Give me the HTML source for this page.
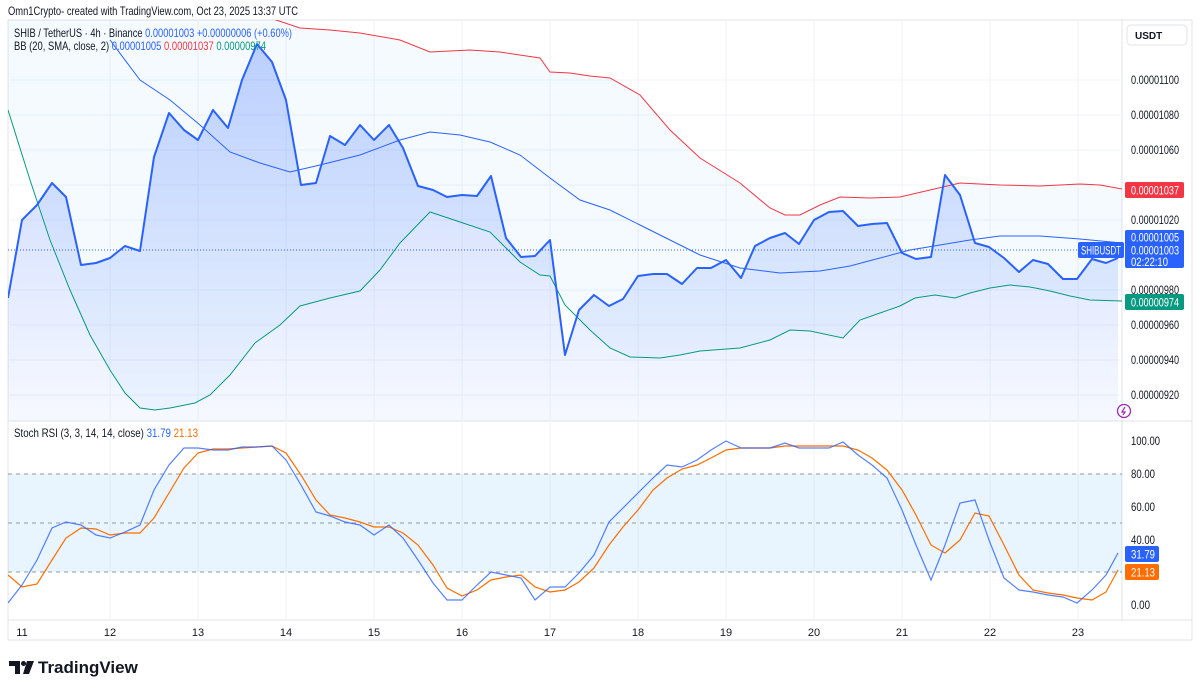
<!DOCTYPE html>
<html><head><meta charset="utf-8"><style>
html,body{margin:0;padding:0;background:#fff;width:1200px;height:691px;overflow:hidden}
svg{display:block;font-family:"Liberation Sans",sans-serif}
</style></head><body>
<svg width="1200" height="691" viewBox="0 0 1200 691" xmlns="http://www.w3.org/2000/svg">
<defs>
<linearGradient id="g" x1="0" y1="0" x2="0" y2="1"><stop offset="0" stop-color="#2962ff" stop-opacity="0.28"/><stop offset="1" stop-color="#2962ff" stop-opacity="0.04"/></linearGradient>
<clipPath id="c1"><rect x="8" y="20" width="1114" height="401"/></clipPath>
<clipPath id="c2"><rect x="8" y="422" width="1114" height="198"/></clipPath>
</defs>
<text x="8" y="15" font-size="12" fill="#131722" textLength="290" lengthAdjust="spacingAndGlyphs">Omn1Crypto- created with TradingView.com, Oct 23, 2025 13:37 UTC</text>
<rect x="8" y="20" width="1184" height="620" fill="none" stroke="#e0e3eb"/>
<line x1="1122" y1="20" x2="1122" y2="620" stroke="#e0e3eb"/>
<line x1="8" y1="421" x2="1192" y2="421" stroke="#e0e3eb"/>
<line x1="8" y1="620" x2="1192" y2="620" stroke="#e0e3eb"/>
<g stroke="#f0f3fa">
<line x1="8" y1="80" x2="1122" y2="80"/><line x1="8" y1="115" x2="1122" y2="115"/><line x1="8" y1="150" x2="1122" y2="150"/><line x1="8" y1="185" x2="1122" y2="185"/><line x1="8" y1="220" x2="1122" y2="220"/><line x1="8" y1="290" x2="1122" y2="290"/><line x1="8" y1="325" x2="1122" y2="325"/><line x1="8" y1="360" x2="1122" y2="360"/><line x1="8" y1="395" x2="1122" y2="395"/>
<line x1="110" y1="20" x2="110" y2="620"/><line x1="198" y1="20" x2="198" y2="620"/><line x1="286" y1="20" x2="286" y2="620"/><line x1="374" y1="20" x2="374" y2="620"/><line x1="462" y1="20" x2="462" y2="620"/><line x1="550" y1="20" x2="550" y2="620"/><line x1="638" y1="20" x2="638" y2="620"/><line x1="726" y1="20" x2="726" y2="620"/><line x1="814" y1="20" x2="814" y2="620"/><line x1="902" y1="20" x2="902" y2="620"/><line x1="990" y1="20" x2="990" y2="620"/><line x1="1078" y1="20" x2="1078" y2="620"/>
</g>
<g clip-path="url(#c1)">
<polygon fill="#2196f3" fill-opacity="0.05" points="110,0 270,18 300,28 330,30 360,33 400,40 430,52 470,50 500,52 540,58 550,72 570,73 590,76 610,78 640,95 670,130 700,158 740,183 770,208 785,215 800,215 820,205 840,197 870,198 900,197 930,190 960,183 1000,185 1040,186 1080,184 1100,185 1122,189 1122,301 1090,300 1070,296 1050,291 1030,287 1010,285 990,288 970,293 955,298 935,295 915,298 900,306 880,313 860,320 843,338 810,331 790,330 770,340 740,348 700,351 680,355 660,358 630,357 610,348 590,330 565,305 550,276 540,275 520,262 490,232 460,222 430,212 400,243 380,270 360,291 330,298 300,306 280,325 255,343 230,375 210,395 195,403 170,408 155,410 140,408 125,393 110,370 90,335 70,290 50,240 30,180 8,110 0,100 0,0"/>
<polygon fill="url(#g)" points="8,298 22,220 37,205 52,183 66,197 81,265 96,263 110,258 125,246 140,251 154,157 169,113 184,130 198,140 213,110 228,128 242,80 257,44 272,62 286,100 301,185 316,183 330,136 345,145 360,125 374,140 389,125 403,148 418,186 433,190 447,197 462,195 477,196 491,176 506,238 521,257 535,256 550,240 565,355 579,310 594,295 609,306 623,299 638,276 653,274 667,274 682,284 697,268 711,268 726,260 741,278 755,246 770,238 785,233 799,244 814,220 829,212 843,211 858,226 872,224 887,223 902,253 916,259 931,257 945,175 960,195 975,243 989,247 1004,258 1019,272 1033,260 1048,264 1063,279 1077,279 1092,259 1106,263 1118,258 1118,421 8,421"/>
<polyline fill="none" stroke="#f23645" stroke-width="1" points="270,18 300,28 330,30 360,33 400,40 430,52 470,50 500,52 540,58 550,72 570,73 590,76 610,78 640,95 670,130 700,158 740,183 770,208 785,215 800,215 820,205 840,197 870,198 900,197 930,190 960,183 1000,185 1040,186 1080,184 1100,185 1122,189"/>
<polyline fill="none" stroke="#2962ff" stroke-width="1" points="110,40 140,80 170,100 200,125 230,152 260,163 290,172 320,165 360,155 400,140 430,132 460,135 490,142 520,155 550,178 580,200 610,210 640,225 670,240 700,255 740,268 780,273 820,271 850,266 880,258 910,250 940,245 970,240 1000,236 1040,236 1080,239 1122,243"/>
<polyline fill="none" stroke="#089981" stroke-width="1" points="8,110 30,180 50,240 70,290 90,335 110,370 125,393 140,408 155,410 170,408 195,403 210,395 230,375 255,343 280,325 300,306 330,298 360,291 380,270 400,243 430,212 460,222 490,232 520,262 540,275 550,276 565,305 590,330 610,348 630,357 660,358 680,355 700,351 740,348 770,340 790,330 810,331 843,338 860,320 880,313 900,306 915,298 935,295 955,298 970,293 990,288 1010,285 1030,287 1050,291 1070,296 1090,300 1122,301"/>
<line x1="8" y1="250" x2="1122" y2="250" stroke="#2962ff" stroke-dasharray="1,2"/>
<polyline fill="none" stroke="#2962ff" stroke-width="2" stroke-linejoin="round" points="8,298 22,220 37,205 52,183 66,197 81,265 96,263 110,258 125,246 140,251 154,157 169,113 184,130 198,140 213,110 228,128 242,80 257,44 272,62 286,100 301,185 316,183 330,136 345,145 360,125 374,140 389,125 403,148 418,186 433,190 447,197 462,195 477,196 491,176 506,238 521,257 535,256 550,240 565,355 579,310 594,295 609,306 623,299 638,276 653,274 667,274 682,284 697,268 711,268 726,260 741,278 755,246 770,238 785,233 799,244 814,220 829,212 843,211 858,226 872,224 887,223 902,253 916,259 931,257 945,175 960,195 975,243 989,247 1004,258 1019,272 1033,260 1048,264 1063,279 1077,279 1092,259 1106,263 1118,258"/>
</g>
<text x="14" y="37" font-size="12" fill="#131722" textLength="278" lengthAdjust="spacingAndGlyphs">SHIB / TetherUS · 4h · Binance <tspan fill="#2962ff">0.00001003</tspan> <tspan fill="#2962ff">+0.00000006 (+0.60%)</tspan></text>
<text x="14" y="50" font-size="12" fill="#131722" textLength="252" lengthAdjust="spacingAndGlyphs">BB (20, SMA, close, 2) <tspan fill="#2962ff">0.00001005</tspan> <tspan fill="#f23645">0.00001037</tspan> <tspan fill="#089981">0.00000974</tspan></text>
<rect x="1127" y="25" width="60" height="20" rx="4" fill="#fff" stroke="#e0e3eb"/>
<text x="1135" y="39" font-size="10" font-weight="bold" fill="#131722">USDT</text>
<g font-size="12" fill="#131722">
<text x="1131" y="84" textLength="48" lengthAdjust="spacingAndGlyphs">0.00001100</text><text x="1131" y="119" textLength="48" lengthAdjust="spacingAndGlyphs">0.00001080</text><text x="1131" y="154" textLength="48" lengthAdjust="spacingAndGlyphs">0.00001060</text><text x="1131" y="224" textLength="48" lengthAdjust="spacingAndGlyphs">0.00001020</text><text x="1131" y="294" textLength="48" lengthAdjust="spacingAndGlyphs">0.00000980</text><text x="1131" y="329" textLength="48" lengthAdjust="spacingAndGlyphs">0.00000960</text><text x="1131" y="364" textLength="48" lengthAdjust="spacingAndGlyphs">0.00000940</text><text x="1131" y="399" textLength="48" lengthAdjust="spacingAndGlyphs">0.00000920</text>
</g>
<rect x="1125" y="182" width="59" height="16" rx="2" fill="#f23645"/><text x="1131" y="194.5" font-size="12" fill="#fff" textLength="48" lengthAdjust="spacingAndGlyphs">0.00001037</text>
<rect x="1125" y="230" width="59" height="38" rx="2" fill="#2962ff"/>
<text x="1131" y="241.5" font-size="12" fill="#fff" textLength="48" lengthAdjust="spacingAndGlyphs">0.00001005</text><text x="1131" y="254.5" font-size="12" fill="#fff" textLength="48" lengthAdjust="spacingAndGlyphs">0.00001003</text><text x="1131" y="266" font-size="12" fill="#fff" textLength="37" lengthAdjust="spacingAndGlyphs">02:22:10</text>
<rect x="1078" y="242" width="46" height="16" rx="2" fill="#2962ff"/><text x="1081" y="254.5" font-size="11.5" fill="#fff" textLength="40" lengthAdjust="spacingAndGlyphs">SHIBUSDT</text>
<rect x="1125" y="294" width="59" height="16" rx="2" fill="#089981"/><text x="1131" y="306.5" font-size="12" fill="#fff" textLength="48" lengthAdjust="spacingAndGlyphs">0.00000974</text>
<circle cx="1124" cy="411" r="6.5" fill="none" stroke="#9c27b0" stroke-width="1.3"/>
<path d="M1125,407 L1122,412 L1125,412 L1123,415" fill="none" stroke="#9c27b0" stroke-width="1.2"/>
<g clip-path="url(#c2)">
<rect x="8" y="474" width="1114" height="98" fill="#2196f3" fill-opacity="0.1"/>
<g stroke="#9598a1" stroke-dasharray="4,4"><line x1="8" y1="474" x2="1122" y2="474"/><line x1="8" y1="523" x2="1122" y2="523"/><line x1="8" y1="572" x2="1122" y2="572"/></g>
<polyline fill="none" stroke="#ff6d00" stroke-width="1.2" points="8,575 22,587 37,584 52,560 66,538 81,528 96,529 110,535 125,533 140,533 154,518 169,493 184,468 198,453 213,449 228,449 242,448 257,447 272,446 286,453 301,475 316,500 330,515 345,518 360,522 374,527 389,527 403,533 418,545 433,565 447,588 462,596 477,590 491,580 506,577 521,575 535,587 550,592 565,590 579,582 594,568 609,545 623,527 638,510 653,490 667,478 682,469 697,465 711,458 726,450 741,448 755,448 770,448 785,446 799,446 814,446 829,446 843,446 858,450 872,458 887,470 902,490 916,515 931,545 945,553 960,540 975,513 989,516 1004,545 1019,575 1033,590 1048,593 1063,595 1077,598 1092,600 1106,592 1118,570"/>
<polyline fill="none" stroke="#2962ff" stroke-width="1.2" stroke-opacity="0.8" points="8,603 22,585 37,560 52,528 66,522 81,525 96,535 110,538 125,532 140,525 154,490 169,465 184,448 198,448 213,450 228,450 242,447 257,447 272,446 286,460 301,485 316,512 330,516 345,522 360,525 374,535 389,525 403,538 418,560 433,583 447,600 462,600 477,585 491,572 506,575 521,578 535,600 550,587 565,587 579,573 594,555 609,522 623,508 638,493 653,478 667,465 682,467 697,460 711,450 726,441 741,448 755,448 770,448 785,443 799,448 814,448 829,448 843,442 858,455 872,465 887,478 902,510 916,545 931,580 945,545 960,503 975,500 989,540 1004,578 1019,590 1033,592 1048,595 1063,597 1077,603 1092,590 1106,575 1118,553"/>
</g>
<text x="14" y="437" font-size="12" fill="#131722" textLength="184" lengthAdjust="spacingAndGlyphs">Stoch RSI (3, 3, 14, 14, close) <tspan fill="#2962ff">31.79</tspan> <tspan fill="#ff6d00">21.13</tspan></text>
<g font-size="12" fill="#131722">
<text x="1131" y="445" textLength="29" lengthAdjust="spacingAndGlyphs">100.00</text><text x="1131" y="478" textLength="24" lengthAdjust="spacingAndGlyphs">80.00</text><text x="1131" y="511" textLength="24" lengthAdjust="spacingAndGlyphs">60.00</text><text x="1131" y="544" textLength="24" lengthAdjust="spacingAndGlyphs">40.00</text><text x="1131" y="609" textLength="19" lengthAdjust="spacingAndGlyphs">0.00</text>
</g>
<rect x="1125" y="546" width="34" height="16" rx="2" fill="#2962ff"/><text x="1131" y="558.5" font-size="12" fill="#fff" textLength="24" lengthAdjust="spacingAndGlyphs">31.79</text>
<rect x="1125" y="564" width="34" height="16" rx="2" fill="#ff6d00"/><text x="1131" y="576.5" font-size="12" fill="#fff" textLength="24" lengthAdjust="spacingAndGlyphs">21.13</text>
<g font-size="11" fill="#131722" text-anchor="middle">
<text x="22" y="636">11</text><text x="110" y="636">12</text><text x="198" y="636">13</text><text x="286" y="636">14</text><text x="374" y="636">15</text><text x="462" y="636">16</text><text x="550" y="636">17</text><text x="638" y="636">18</text><text x="726" y="636">19</text><text x="814" y="636">20</text><text x="902" y="636">21</text><text x="990" y="636">22</text><text x="1078" y="636">23</text>
</g>
<path d="M9,661 H20 V674 H15 V666 H9 Z" fill="#131722"/>
<circle cx="23.5" cy="663.5" r="2.5" fill="#131722"/>
<path d="M27,661 H34 L29,674 H23 Z" fill="#131722"/>
<text x="38" y="673" font-size="17" font-weight="bold" fill="#131722">TradingView</text>
</svg>
</body></html>
